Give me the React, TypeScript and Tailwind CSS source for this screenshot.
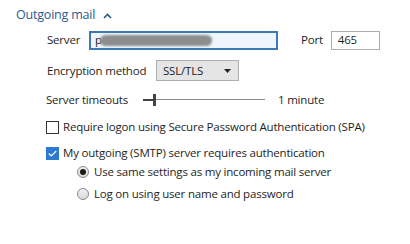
import React from "react";

export default function App() {
  const font = { fontFamily: '"Open Sans", "Noto Sans", sans-serif' };
  return (
    <div className="w-[410px] h-[244px] bg-white text-[11.5px] tracking-[-0.2px] text-[#1e1e1e] overflow-hidden" style={font}>
      <div className="pl-[16px] mt-[5px] flex items-center h-[20px]">
        <span className="text-[12.5px] tracking-[-0.2px] text-[#2c5a8f]">Outgoing mail</span>
        <svg width="9" height="6" viewBox="0 0 9 6" className="ml-[8px] mt-[1px]">
          <path d="M1 5 L4.5 1.5 L8 5" stroke="#2c5a8f" strokeWidth="1.6" fill="none" />
        </svg>
      </div>
      <div className="flex items-center mt-[5px] h-[20px]">
        <span className="pl-[47px] w-[89px]">Server</span>
        <div className="w-[189px] h-[19px] border-2 border-[#3b7ab5] bg-[#eef5fc] flex items-center pl-[4px] relative">
          <span>p</span>
          <div className="absolute left-[9px] top-[2px] w-[112px] h-[11px] rounded-full bg-[#8d8d8d] blur-[1px]" />
        </div>
        <span className="ml-[23px]">Port</span>
        <div className="ml-[8px] w-[49px] h-[19px] border border-[#acacac] flex items-center pl-[6px]">465</div>
      </div>
      <div className="flex items-center mt-[10px] h-[21px]">
        <span className="pl-[47px] w-[156px]">Encryption method</span>
        <div className="w-[83px] h-[21px] border border-[#adadad] bg-[#e5e5e5] flex items-center justify-between pl-[6px] pr-[7px]">
          <span>SSL/TLS</span>
          <svg width="7" height="4" viewBox="0 0 7 4"><path d="M0 0 L7 0 L3.5 4 Z" fill="#222" /></svg>
        </div>
      </div>
      <div className="flex items-center mt-[9px] h-[20px]">
        <span className="pl-[46px] w-[143px]">Server timeouts</span>
        <div className="relative w-[122px] h-[12px]">
          <div className="absolute left-0 top-[5px] w-[12px] h-[2px] bg-[#444]" />
          <div className="absolute left-[12px] top-[5px] w-[110px] h-px bg-[#8a8a8a]" />
          <div className="absolute left-[10px] top-0 w-[3px] h-[12px] bg-[#444]" />
        </div>
        <span className="ml-[13px]">1 minute</span>
      </div>
      <div className="flex items-center mt-[7px] h-[20px] pl-[46px]">
        <div className="w-[13px] h-[13px] border border-[#333] bg-white" />
        <span className="ml-[4px]">Require logon using Secure Password Authentication (SPA)</span>
      </div>
      <div className="flex items-center mt-[6px] h-[20px] pl-[46px]">
        <div className="w-[13px] h-[13px] border border-[#2b79d0] bg-[#2b79d0] flex items-center justify-center">
          <svg width="9" height="7" viewBox="0 0 9 7"><path d="M0.8 3.5 L3.3 6 L8.2 1" stroke="white" strokeWidth="1.2" fill="none" /></svg>
        </div>
        <span className="ml-[4px]">My outgoing (SMTP) server requires authentication</span>
      </div>
      <div className="flex items-center h-[18px] pl-[77px]">
        <div className="w-[12px] h-[12px] rounded-full border border-[#8a8a8a] bg-gradient-to-b from-[#f2f2f2] to-[#d8d8d8] flex items-center justify-center">
          <div className="w-[6px] h-[6px] rounded-full bg-[#1a1a1a]" />
        </div>
        <span className="ml-[5px]">Use same settings as my incoming mail server</span>
      </div>
      <div className="flex items-center mt-[4px] h-[18px] pl-[77px]">
        <div className="w-[12px] h-[12px] rounded-full border border-[#8a8a8a] bg-gradient-to-b from-[#f2f2f2] to-[#d8d8d8]" />
        <span className="ml-[5px]">Log on using user name and password</span>
      </div>
    </div>
  );
}
